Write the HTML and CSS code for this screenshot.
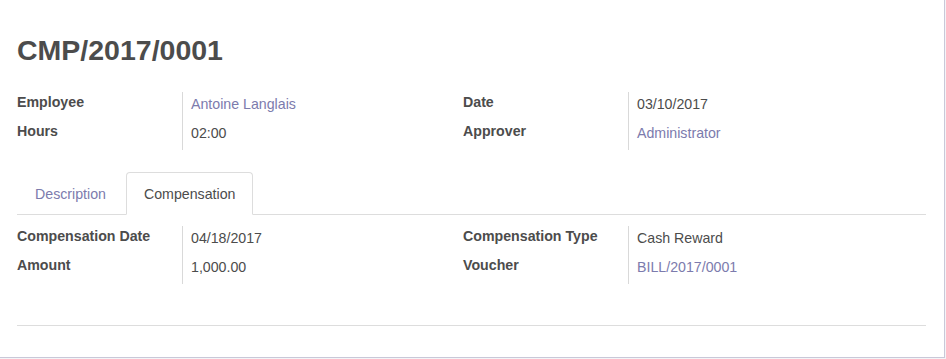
FILE: index.html
```html
<!DOCTYPE html>
<html lang="en">
<head>
    <meta charset="UTF-8">
    <meta name="viewport" content="width=device-width, initial-scale=1.0">
    <title>CMP/2017/0001</title>
    <link rel="stylesheet" href="styles.css">
</head>
<body>

    <div class="sheet">
        <h1>CMP/2017/0001</h1>

        <div class="groups">
            <div class="group">
                <div class="label">Employee</div>
                <div class="value"><a href="#">Antoine Langlais</a></div>
                <div class="label">Hours</div>
                <div class="value">02:00</div>
            </div>
            <div class="group">
                <div class="label">Date</div>
                <div class="value">03/10/2017</div>
                <div class="label">Approver</div>
                <div class="value"><a href="#">Administrator</a></div>
            </div>
        </div>

        <ul class="tabs">
            <li><a href="#">Description</a></li>
            <li class="active"><a href="#">Compensation</a></li>
        </ul>

        <div class="groups tab-content">
            <div class="group">
                <div class="label">Compensation Date</div>
                <div class="value">04/18/2017</div>
                <div class="label">Amount</div>
                <div class="value">1,000.00</div>
            </div>
            <div class="group">
                <div class="label">Compensation Type</div>
                <div class="value">Cash Reward</div>
                <div class="label">Voucher</div>
                <div class="value"><a href="#">BILL/2017/0001</a></div>
            </div>
        </div>

        <hr class="footer-line">
    </div>

</body>
</html>
```

FILE: styles.css
```css
body {
    margin: 0;
    height: 359px;
    background-color: #f4f4f7;
    font-family: "Liberation Sans", Arial, sans-serif;
    font-size: 14.2px;
    color: #4c4c4c;
    overflow: hidden;
}
a {
    color: #7c7bad;
    text-decoration: none;
}
.sheet {
    width: 909px;
    height: 357px;
    padding: 0 18px 0 17px;
    box-sizing: content-box;
    background-color: white;
    border-right: 1px solid #c9c8d8;
    border-bottom: 1px solid #c9c8d8;
}
.sheet::before {
    content: "";
    display: block;
    height: 32px;
}
h1 {
    margin: 0;
    font-size: 28.5px;
    line-height: 36px;
    font-weight: bold;
    color: #4c4c4c;
}
.groups {
    display: grid;
    grid-template-columns: 446px 1fr;
    margin-top: 24px;
}
.group {
    display: grid;
    grid-template-columns: 165px 1fr;
    grid-auto-rows: 29px;
}
.label {
    font-weight: bold;
    line-height: 18px;
    padding-top: 1px;
}
.value {
    line-height: 18px;
    padding: 3px 0 0 8px;
    border-left: 1px solid #d9d9d9;
}
.tabs {
    display: flex;
    list-style: none;
    margin: 22px 0 0;
    padding: 0;
    border-bottom: 1px solid #dddddd;
}
.tabs li {
    margin: 0 2px -1px 0;
}
.tabs a {
    display: block;
    padding: 12px 17px 11px;
    line-height: 18px;
    border: 1px solid transparent;
    border-radius: 4px 4px 0 0;
}
.tabs .active a {
    color: #4c4c4c;
    background-color: white;
    border-color: #dddddd #dddddd white;
}
.tab-content {
    margin-top: 11px;
}
.footer-line {
    margin: 41px 0 0;
    border: none;
    border-top: 1px solid #dddddd;
}
```
